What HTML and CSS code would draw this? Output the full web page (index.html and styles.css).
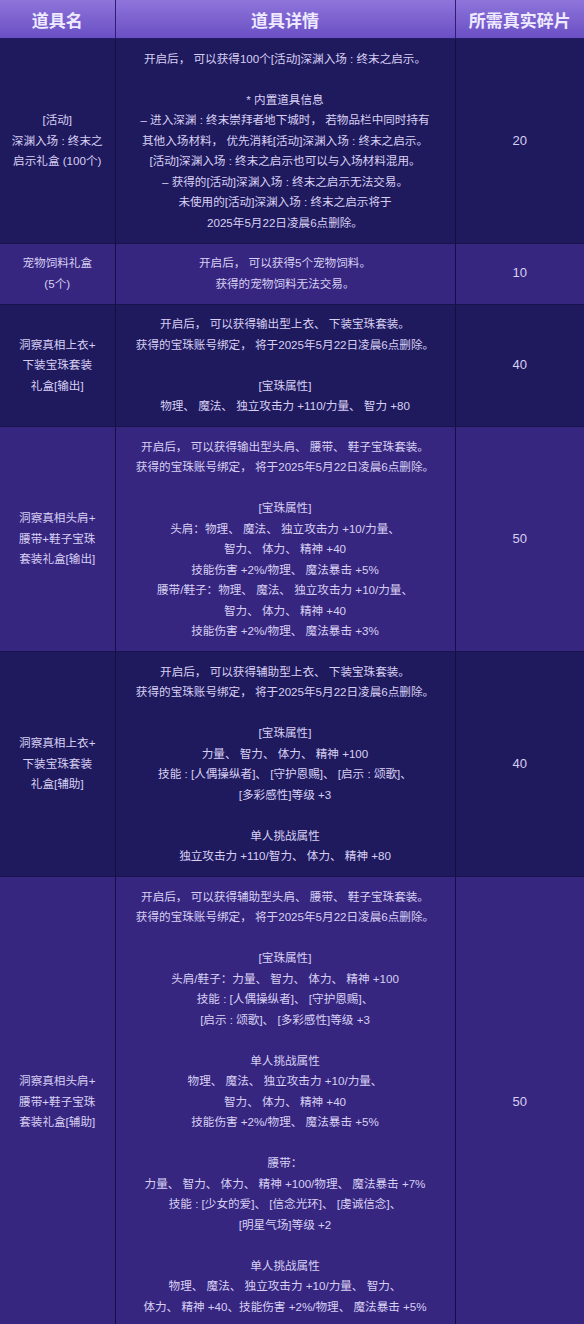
FILE: index.html
```html
<!DOCTYPE html>
<html lang="zh-CN">
<head>
<meta charset="utf-8">
<title>道具兑换</title>
<link rel="stylesheet" href="styles.css">
</head>
<body>
<table class="items">
  <colgroup>
    <col class="c-name">
    <col class="c-detail">
    <col class="c-cost">
  </colgroup>
  <thead>
    <tr>
      <th>道具名</th>
      <th>道具详情</th>
      <th>所需真实碎片</th>
    </tr>
  </thead>
  <tbody>
    <tr class="dark">
      <td>[活动]<br>深渊入场 : 终末之<br>启示礼盒 (100个)</td>
      <td>开启后， 可以获得100个[活动]深渊入场 : 终末之启示。<br><br>* 内置道具信息<br>– 进入深渊 : 终末崇拜者地下城时， 若物品栏中同时持有<br>其他入场材料， 优先消耗[活动]深渊入场 : 终末之启示。<br>[活动]深渊入场 : 终末之启示也可以与入场材料混用。<br>– 获得的[活动]深渊入场 : 终末之启示无法交易。<br>未使用的[活动]深渊入场 : 终末之启示将于<br>2025年5月22日凌晨6点删除。</td>
      <td>20</td>
    </tr>
    <tr class="light">
      <td>宠物饲料礼盒<br>(5个)</td>
      <td>开启后， 可以获得5个宠物饲料。<br>获得的宠物饲料无法交易。</td>
      <td>10</td>
    </tr>
    <tr class="dark">
      <td>洞察真相上衣+<br>下装宝珠套装<br>礼盒[输出]</td>
      <td>开启后， 可以获得输出型上衣、 下装宝珠套装。<br>获得的宝珠账号绑定， 将于2025年5月22日凌晨6点删除。<br><br>[宝珠属性]<br>物理、 魔法、 独立攻击力 +110/力量、 智力 +80</td>
      <td>40</td>
    </tr>
    <tr class="light">
      <td>洞察真相头肩+<br>腰带+鞋子宝珠<br>套装礼盒[输出]</td>
      <td>开启后， 可以获得输出型头肩、 腰带、 鞋子宝珠套装。<br>获得的宝珠账号绑定， 将于2025年5月22日凌晨6点删除。<br><br>[宝珠属性]<br>头肩：物理、 魔法、 独立攻击力 +10/力量、<br>智力、 体力、 精神 +40<br>技能伤害 +2%/物理、 魔法暴击 +5%<br>腰带/鞋子：物理、 魔法、 独立攻击力 +10/力量、<br>智力、 体力、 精神 +40<br>技能伤害 +2%/物理、 魔法暴击 +3%</td>
      <td>50</td>
    </tr>
    <tr class="dark">
      <td>洞察真相上衣+<br>下装宝珠套装<br>礼盒[辅助]</td>
      <td>开启后， 可以获得辅助型上衣、 下装宝珠套装。<br>获得的宝珠账号绑定， 将于2025年5月22日凌晨6点删除。<br><br>[宝珠属性]<br>力量、 智力、 体力、 精神 +100<br>技能 : [人偶操纵者]、 [守护恩赐]、 [启示 : 颂歌]、<br>[多彩感性]等级 +3<br><br>单人挑战属性<br>独立攻击力 +110/智力、 体力、 精神 +80</td>
      <td>40</td>
    </tr>
    <tr class="light">
      <td>洞察真相头肩+<br>腰带+鞋子宝珠<br>套装礼盒[辅助]</td>
      <td>开启后， 可以获得辅助型头肩、 腰带、 鞋子宝珠套装。<br>获得的宝珠账号绑定， 将于2025年5月22日凌晨6点删除。<br><br>[宝珠属性]<br>头肩/鞋子：力量、 智力、 体力、 精神 +100<br>技能 : [人偶操纵者]、 [守护恩赐]、<br>[启示 : 颂歌]、 [多彩感性]等级 +3<br><br>单人挑战属性<br>物理、 魔法、 独立攻击力 +10/力量、<br>智力、 体力、 精神 +40<br>技能伤害 +2%/物理、 魔法暴击 +5%<br><br>腰带：<br>力量、 智力、 体力、 精神 +100/物理、 魔法暴击 +7%<br>技能 : [少女的爱]、 [信念光环]、 [虔诚信念]、<br>[明星气场]等级 +2<br><br>单人挑战属性<br>物理、 魔法、 独立攻击力 +10/力量、 智力、<br>体力、 精神 +40、技能伤害 +2%/物理、 魔法暴击 +5%</td>
      <td>50</td>
    </tr>
  </tbody>
</table>
</body>
</html>
```

FILE: styles.css
```css
html, body {
  margin: 0;
  padding: 0;
  background: #362680;
}

.items {
  width: 584px;
  border-collapse: collapse;
  table-layout: fixed;
  font-family: "Liberation Sans", "Noto Sans CJK SC", sans-serif;
  font-size: 11.6px;
  color: #d8d0f3;
}

.c-name { width: 115px; }
.c-detail { width: 340px; }
.c-cost { width: 129px; }

.items th {
  height: 38px;
  padding: 0;
  font-size: 17px;
  font-weight: bold;
  color: #eeeaff;
  background: linear-gradient(to bottom, #8e74da, #6a4fc4);
  border-left: 1px solid #2a1f70;
  border-bottom: 1px solid #241a66;
  text-align: center;
  vertical-align: middle;
}

.items th:first-child { border-left: none; }

.items td {
  padding: 9.5px 0;
  line-height: 20.5px;
  text-align: center;
  vertical-align: middle;
  white-space: nowrap;
  border-left: 1px solid #140f3e;
  border-bottom: 1px solid #19134c;
}

.items td:first-child { border-left: none; }

.items td:last-child { font-size: 13px; }

.dark td { background: #1f1a5e; }
.light td { background: #362680; }
```
